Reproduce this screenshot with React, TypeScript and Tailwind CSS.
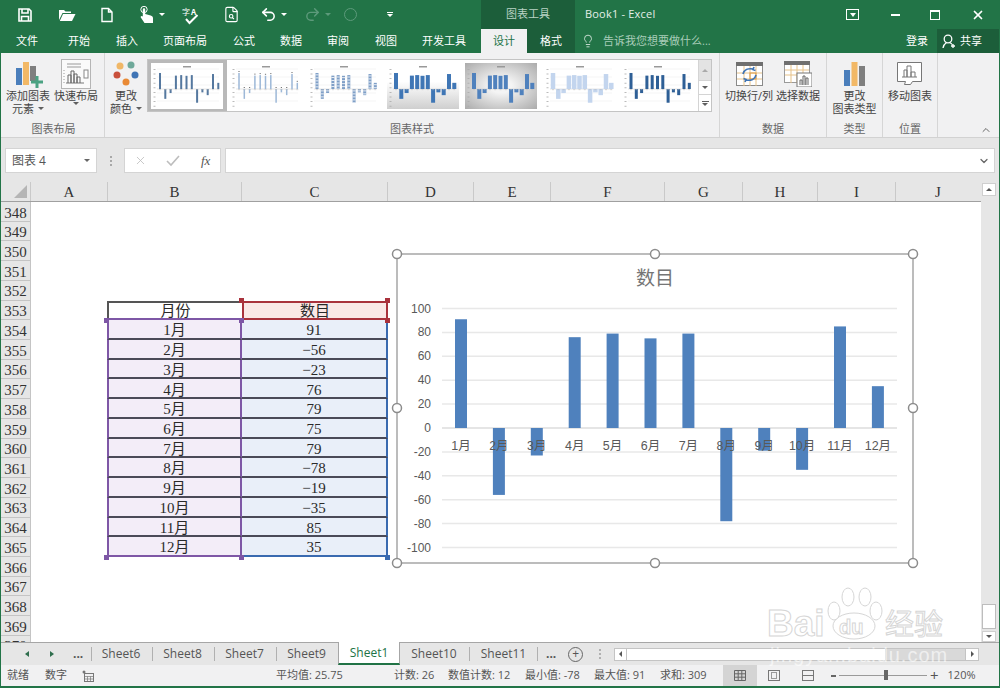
import { ChevronDown, FileSearch, Lightbulb, Redo2, Undo2, X } from "lucide-react";

const months = ["1月", "2月", "3月", "4月", "5月", "6月", "7月", "8月", "9月", "10月", "11月", "12月"];
const values = [91, -56, -23, 76, 79, 75, 79, -78, -19, -35, 85, 35];
const axis = [100, 80, 60, 40, 20, 0, -20, -40, -60, -80, -100];
const columns = [
  { name: "A", width: "w-[77px]" },
  { name: "B", width: "w-[134px]" },
  { name: "C", width: "w-[146px]" },
  { name: "D", width: "w-[86px]" },
  { name: "E", width: "w-[77px]" },
  { name: "F", width: "w-[114px]" },
  { name: "G", width: "w-[78px]" },
  { name: "H", width: "w-[75px]" },
  { name: "I", width: "w-[78px]" },
  { name: "J", width: "w-[84px]" },
];

function Caret({ className = "border-t-[#5f5f5f]" }: { className?: string }) {
  return <span className={`inline-block h-0 w-0 border-x-[3px] border-t-[3px] border-x-transparent ${className}`} />;
}

function SaveIcon() {
  return (
    <svg width="16" height="16" viewBox="0 0 16 16" fill="none" stroke="white" strokeWidth="1.6">
      <path d="M2 2h10l2 2v10H2z" />
      <path d="M5 2v4h6V2M4.500 14V9.500h7V14" />
    </svg>
  );
}

function OpenIcon() {
  return (
    <svg width="18" height="16" viewBox="0 0 18 16" fill="white">
      <path d="M1 3h5l1.500 1.500H13V6H4.500L1 13z" />
      <path d="M5 7h12.500L14 14H1.800z" />
    </svg>
  );
}

function NewIcon() {
  return (
    <svg width="14" height="16" viewBox="0 0 14 16" fill="none" stroke="white" strokeWidth="1.400">
      <path d="M2 1.500h6.500L12 5v9.500H2zM8.500 1.500V5H12" />
    </svg>
  );
}

function TouchIcon() {
  return (
    <svg width="14" height="18" viewBox="0 0 14 18" fill="white">
      <circle cx="4" cy="3.500" r="3.200" fill="none" stroke="white" strokeWidth="1" />
      <path d="M2.800 3.500a1.200 1.200 0 0 1 2.400 0v4.500l5.500 1.500c1.500.4 2.300 1.300 2.300 2.800V17H4.500L.8 11.500c-.6-1 .8-2 1.600-1.200l.4.500z" />
    </svg>
  );
}

function SpellIcon() {
  return (
    <svg width="20" height="20" viewBox="0 0 20 20" className="[font-family:'Noto_Sans_CJK_SC',sans-serif]">
      <text x="1" y="10" fontSize="8" fill="white">字</text>
      <text x="10" y="10" fontSize="8" fontWeight="700" fill="white">A</text>
      <path d="M5 14l3.500 4 8-8" fill="none" stroke="white" strokeWidth="2" />
    </svg>
  );
}

function AddElementIcon() {
  return (
    <svg width="30" height="30" viewBox="0 0 30 30">
      <rect x="3" y="9" width="6" height="17" fill="#4a7ebb" />
      <rect x="10" y="3" width="6" height="23" fill="#f2b866" />
      <rect x="17" y="7" width="6" height="15" fill="#7f7f7f" />
      <path d="M22.500 17h3v4.500H30v3h-4.500V29h-3v-4.500H18v-3h4.500z" fill="#4ba282" />
    </svg>
  );
}

function QuickLayoutIcon() {
  return (
    <svg width="30" height="30" viewBox="0 0 30 30">
      <rect x=".5" y=".5" width="29" height="29" fill="#fafafa" stroke="#b5b5b5" />
      <path d="M6 5h14M6 8h14" stroke="#9a9a9a" />
      <path d="M3 11v1M3 14v1M3 17v1M3 20v1M3 23v1" stroke="#9a9a9a" />
      <path d="M5 24h18" stroke="#777" />
      <path d="M7 24v-8h3v8M10 24V12h3v12M13 24v-9h3v9M16 24v-6h3v6" fill="none" stroke="#666" />
      <rect x="23" y="11" width="4" height="8" fill="white" stroke="#888" />
    </svg>
  );
}

function ColorsIcon() {
  return (
    <svg width="28" height="28" viewBox="0 0 28 28">
      <circle cx="8" cy="6" r="3.500" fill="#f0b767" />
      <circle cx="19" cy="5" r="3.500" fill="#6fa99a" />
      <circle cx="5" cy="15" r="3.500" fill="#c9503c" />
      <circle cx="23" cy="15" r="3.500" fill="#3f74b5" />
      <circle cx="14" cy="22" r="3.500" fill="#e98a35" />
    </svg>
  );
}

function SwitchIcon() {
  return (
    <svg width="27" height="25" viewBox="0 0 27 25">
      <rect x=".5" y=".5" width="26" height="23" fill="white" stroke="#8a8a8a" />
      <rect x="0" y="0" width="27" height="4" fill="#6f6f6f" />
      <path d="M1 11h25M1 17h25M8 4v20M14 4v20M20 4v20" stroke="#e7c289" />
      <rect x="14" y="11" width="6" height="6" fill="none" stroke="#dd9b44" />
      <path d="M7 12c1-4 5-6 10-5M18 5l-1 2.500 2.500 1M20 13c-1 4-5 6-10 5M9 20l1-2.500-2.500-1" fill="none" stroke="#3f74b5" strokeWidth="1.700" />
    </svg>
  );
}

function SelectDataIcon() {
  return (
    <svg width="28" height="26" viewBox="0 0 28 26">
      <rect x=".5" y=".5" width="25" height="21" fill="white" stroke="#9a9a9a" />
      <rect x="0" y="0" width="26" height="4" fill="#6f6f6f" />
      <path d="M1 9h24M1 14h24M7 4v18M13 4v18M19 4v18" stroke="#e7c289" />
      <rect x="13" y="12" width="15" height="14" fill="white" stroke="#777" />
      <path d="M16 24v-5h2v5M19 24V15h2v9M22 24v-7h2v7" fill="none" stroke="#666" />
    </svg>
  );
}

function ChartTypeIcon() {
  return (
    <svg width="22" height="24" viewBox="0 0 22 24">
      <rect x="0" y="8" width="6" height="16" fill="#4a7ebb" />
      <rect x="7.500" y="0" width="6" height="24" fill="#f2b866" />
      <rect x="15" y="4" width="6" height="20" fill="#7f7f7f" />
    </svg>
  );
}

function MoveChartIcon() {
  return (
    <svg width="26" height="24" viewBox="0 0 26 24" fill="none" stroke="#777">
      <path d="M.5.5h24v19h-9l-2 3h-6l1-3H.5z" fill="white" />
      <path d="M5 15h15M7 15V8h3v7M10 15V4h4v11M14 15v-5h4v5" />
    </svg>
  );
}

function SectionLabel({ text }: { text: string }) {
  return <div className="h-[17px] text-center text-[11px] leading-[17px] text-[#666]">{text}</div>;
}

function RibbonButton({ icon, lines, width, caret }: { icon: React.ReactNode; lines: string[]; width: string; caret?: boolean }) {
  return (
    <div className={`flex shrink-0 flex-col items-center ${width}`}>
      <div className="flex h-[30px] items-center justify-center">{icon}</div>
      {lines.map((line, i) => (
        <div key={i} className="flex items-center gap-1 whitespace-nowrap text-[11px] leading-[13px] text-[#444]">
          {line}
          {caret && i === lines.length - 1 && <Caret />}
        </div>
      ))}
    </div>
  );
}

// tiny previews in the chart styles gallery
function Thumb({ kind }: { kind: number }) {
  const zero = 26;
  const colors = ["#55789f", "#9db8d8", "#7f9fc7", "#3f76b5", "#4f81bd", "#c3d5ee", "#2e5f96"];
  const widths = [2, 1.500, 3, 4, 4, 4.500, 3];
  return (
    <svg width="72" height="46" viewBox="0 0 72 46" className="block">
      <defs>
        <linearGradient id="thumbFade" x1="0" y1="0" x2="0" y2="1">
          <stop offset="0.4" stopColor="#ffffff" />
          <stop offset="1" stopColor="#cfcfcf" />
        </linearGradient>
        <radialGradient id="thumbGray" r="0.75">
          <stop offset="0.2" stopColor="#f4f4f4" />
          <stop offset="1" stopColor="#a5a5a5" />
        </radialGradient>
      </defs>
      <rect width="72" height="46" fill={kind === 3 ? "url(#thumbFade)" : kind === 4 ? "url(#thumbGray)" : "white"} />
      <rect x="32" y="3" width="8" height="1.500" fill="#999" />
      {kind < 3 || kind > 4
        ? [6, 14, 22, 30, 38].map((y) => <path key={y} d={`M6 ${y}h62`} stroke="#efefef" strokeWidth=".6" />)
        : null}
      <path d={`M6 ${zero}h62`} stroke="#c9c9c9" strokeWidth=".5" />
      {values.map((v, i) => {
        const h = Math.abs(v) * 0.176;
        const x = 9 + i * 5.300;
        const y = v > 0 ? zero - h : zero;
        return (
          <g key={i}>
            <rect x={x - widths[kind] / 2} y={y} width={widths[kind]} height={h} fill={colors[kind]} />
            {kind === 1 && <rect x={x - 0.6} y={y - 2} width="1.200" height="1" fill="#777" />}
            {kind === 2 && [0, 3, 6, 9, 12].map((d) => (d < h ? <rect key={d} x={x - 1.500} y={y + d + 1.500} width="3" height=".8" fill="white" /> : null))}
            <rect x={x - 1} y={zero + 0.5} width="2" height=".6" fill="#bbb" />
          </g>
        );
      })}
      {[0, 1, 2, 3, 4, 5, 6, 7, 8].map((i) => (
        <rect key={i} x="2.500" y={6 + i * 4.600} width="2" height=".8" fill="#aaa" />
      ))}
    </svg>
  );
}

function QatIcons() {
  return (
    <div className="flex w-[480px] items-center text-white">
      <span className="ml-[16px] flex w-[16px] justify-center"><SaveIcon /></span>
      <span className="ml-[25px] flex w-[18px] justify-center"><OpenIcon /></span>
      <span className="ml-[23px] flex w-[16px] justify-center"><NewIcon /></span>
      <span className="ml-[24px] flex w-[16px] justify-center"><TouchIcon /></span>
      <span className="ml-[4px] flex"><Caret className="border-t-white" /></span>
      <span className="ml-[16px] flex w-[20px] justify-center"><SpellIcon /></span>
      <span className="ml-[20px] flex w-[20px] justify-center"><FileSearch size={17} strokeWidth={1.600} /></span>
      <span className="ml-[17px] flex w-[20px] justify-center"><Undo2 size={17} strokeWidth={2.200} /></span>
      <span className="ml-[3px] flex"><Caret className="border-t-white" /></span>
      <span className="ml-[15px] flex w-[20px] justify-center text-[#5d9a7b]"><Redo2 size={17} strokeWidth={2} /></span>
      <span className="ml-[3px] flex"><Caret className="border-t-[#5d9a7b]" /></span>
      <span className="ml-[13px] h-[13px] w-[13px] rounded-full border border-[#5d9a7b]" />
      <span className="ml-[30px] flex flex-col items-center gap-[1px]">
        <span className="h-px w-[6px] bg-white" />
        <Caret className="border-t-white" />
      </span>
    </div>
  );
}

function TopBar() {
  const tabs = [
    { label: "文件", width: "w-[52px]" },
    { label: "开始", width: "w-[52px]" },
    { label: "插入", width: "w-[44px]" },
    { label: "页面布局", width: "w-[72px]" },
    { label: "公式", width: "w-[46px]" },
    { label: "数据", width: "w-[48px]" },
    { label: "审阅", width: "w-[46px]" },
    { label: "视图", width: "w-[50px]" },
    { label: "开发工具", width: "w-[66px]" },
  ];
  return (
    <div className="h-[53px] shrink-0 bg-[#227447]">
      <div className="flex h-[29px]">
        <QatIcons />
        <div className="flex w-[94px] items-center justify-center bg-[#1c5e3a] text-[11px] text-[#b9d3c5]">图表工具</div>
        <div className="ml-[10px] flex items-center text-[11px] tracking-[0.2px] text-[#e4efe9]">Book1 - Excel</div>
        <div className="ml-auto flex items-center text-white">
          <span className="mr-[32px] flex h-[11px] w-[13px] items-center justify-center border border-white">
            <span className="h-0 w-0 border-x-[3px] border-t-[4px] border-x-transparent border-t-white" />
          </span>
          <span className="mr-[30px] h-[2px] w-[9px] bg-white" />
          <span className="mr-[31px] h-[10px] w-[10px] border border-t-2 border-white" />
          <X size={14} strokeWidth={3} className="mr-[14px]" />
        </div>
      </div>
      <div className="flex h-[24px] items-center text-[11px] text-white">
        {tabs.map((t) => (
          <div key={t.label} className={`text-center ${t.width}`}>{t.label}</div>
        ))}
        <div className="ml-[4px] flex h-full w-[46px] items-center justify-center bg-[#f1f1f2] text-[#217346]">设计</div>
        <div className="flex h-full w-[48px] items-center justify-center bg-[#1c5e3a]">格式</div>
        <Lightbulb size={14} strokeWidth={1.500} className="ml-[6px] text-[#d8e8df]" />
        <span className="ml-[8px] whitespace-nowrap text-[#a9cdb9]">告诉我您想要做什么...</span>
        <span className="ml-auto mr-[9px]">登录</span>
        <div className="flex h-full w-[62px] items-center gap-[4px] bg-[#1c5e3a] pl-[5px]">
          <svg width="14" height="15" viewBox="0 0 14 15" fill="none" stroke="white" strokeWidth="1.300">
            <circle cx="6" cy="5" r="3.800" />
            <path d="M1 14c.5-3 2-4.500 3.500-5.500M7.500 8.500c1 .4 2 1 2.500 2M11 10v4M9 12h4" />
          </svg>
          共享
        </div>
      </div>
    </div>
  );
}

function Ribbon() {
  return (
    <div className="relative flex h-[85px] shrink-0 border-b border-[#d2d2d2] bg-[#f1f1f2]">
      <div className="flex w-[104px] flex-col border-r border-[#d6d6d6] pl-[2px]">
        <div className="flex flex-1 pt-[6px]">
          <RibbonButton icon={<AddElementIcon />} lines={["添加图表", "元素"]} caret width="w-[50px]" />
          <RibbonButton icon={<QuickLayoutIcon />} lines={["快速布局", ""]} caret width="w-[46px]" />
        </div>
        <SectionLabel text="图表布局" />
      </div>

      <div className="flex w-[615px] flex-col border-r border-[#d6d6d6]">
        <div className="flex flex-1 pt-[6px]">
          <RibbonButton icon={<ColorsIcon />} lines={["更改", "颜色"]} caret width="w-[42px]" />
          <div className="flex h-[53px] w-[565px] border border-[#c4c4c4] bg-white">
            {[0, 1, 2, 3, 4, 5, 6].map((k) => (
              <div key={k} className={`flex-1 p-[3px] ${k === 0 ? "bg-[#b9b9b9]" : ""}`}>
                <Thumb kind={k} />
              </div>
            ))}
            <div className="flex w-[13px] shrink-0 flex-col border-l border-[#d4d4d4] text-[#666]">
              <div className="flex h-[20px] items-center justify-center bg-[#e3e3e3]"><span className="h-0 w-0 border-x-[3px] border-b-[3px] border-x-transparent border-b-[#aaa]" /></div>
              <div className="flex h-[15px] items-center justify-center border-y border-[#d4d4d4]"><Caret /></div>
              <div className="flex flex-1 flex-col items-center justify-center gap-[1px]">
                <span className="h-px w-[7px] bg-[#5f5f5f]" />
                <Caret />
              </div>
            </div>
          </div>
        </div>
        <SectionLabel text="图表样式" />
      </div>

      <div className="flex w-[107px] flex-col border-r border-[#d6d6d6]">
        <div className="flex flex-1 pt-[6px]">
          <RibbonButton icon={<SwitchIcon />} lines={["切换行/列"]} width="w-[58px]" />
          <RibbonButton icon={<SelectDataIcon />} lines={["选择数据"]} width="w-[40px]" />
        </div>
        <SectionLabel text="数据" />
      </div>

      <div className="flex w-[56px] flex-col border-r border-[#d6d6d6]">
        <div className="flex flex-1 justify-center pt-[6px]">
          <RibbonButton icon={<ChartTypeIcon />} lines={["更改", "图表类型"]} width="w-[50px]" />
        </div>
        <SectionLabel text="类型" />
      </div>

      <div className="flex w-[55px] flex-col border-r border-[#d6d6d6]">
        <div className="flex flex-1 justify-center pt-[6px]">
          <RibbonButton icon={<MoveChartIcon />} lines={["移动图表"]} width="w-[50px]" />
        </div>
        <SectionLabel text="位置" />
      </div>

      <ChevronDown size={12} strokeWidth={2} className="absolute bottom-[1px] right-[7px] rotate-180 text-[#666]" />
    </div>
  );
}

function FormulaBar() {
  return (
    <div className="flex h-[44px] shrink-0 items-start bg-[#e6e6e6] pr-[4px] pt-[10px]">
      <div className="ml-[4px] flex h-[25px] w-[92px] items-center justify-between border border-[#d4d4d4] bg-white px-[6px] text-[12px] text-[#555]">
        图表 4
        <Caret className="border-t-[#666]" />
      </div>
      <div className="ml-[12px] flex h-[25px] w-[3px] flex-col items-center justify-center gap-[2px]">
        <span className="h-[2px] w-[2px] bg-[#a8a8a8]" />
        <span className="h-[2px] w-[2px] bg-[#a8a8a8]" />
        <span className="h-[2px] w-[2px] bg-[#a8a8a8]" />
      </div>
      <div className="ml-[12px] flex h-[25px] w-[97px] items-center border border-[#d4d4d4] bg-white">
        <X size={13} strokeWidth={1.500} className="ml-[9px] text-[#bdbdbd]" />
        <svg width="14" height="12" viewBox="0 0 14 12" fill="none" stroke="#bdbdbd" strokeWidth="1.600" className="ml-[19px]">
          <path d="M1 6l4 4 8-9" />
        </svg>
        <span className="ml-[21px] [font-family:'Liberation_Serif',serif] text-[13px] italic text-[#555]">fx</span>
      </div>
      <div className="ml-[4px] flex h-[25px] flex-1 items-center justify-end border border-[#d4d4d4] bg-white pr-[4px]">
        <ChevronDown size={12} strokeWidth={2.500} className="text-[#666]" />
      </div>
    </div>
  );
}

function ColumnHeaders() {
  return (
    <div className="flex h-[20px] shrink-0 border-b border-[#a0a0a0] bg-[#e6e6e6] [font-family:'Liberation_Serif',serif] text-[15px] leading-[20px] text-[#333]">
      <div className="relative w-[30px] border-r border-[#c9c9c9]">
        <span className="absolute bottom-[3px] right-[3px] h-0 w-0 border-b-[13px] border-l-[13px] border-b-[#b5b5b5] border-l-transparent" />
      </div>
      {columns.map((c) => (
        <div key={c.name} className={`border-r border-[#c9c9c9] text-center last:border-r-0 ${c.width}`}>{c.name}</div>
      ))}
    </div>
  );
}

function SheetRow({ n }: { n: number }) {
  const idx = n - 354;
  const isHead = n === 353;
  const isData = idx >= 0 && idx < 12;
  const last = idx === 11;
  let cellB = null;
  let cellC = null;
  if (isHead) {
    cellB = <div className="flex h-full w-[135px] items-center justify-center border-b-2 border-l-2 border-t-2 border-[#555] border-b-[#7e57a6] pt-[2px]">月份</div>;
    cellC = <div className="flex h-full w-[146px] items-center justify-center border-2 border-[#a9323c] bg-[#fae8e6] pt-[2px]">数目</div>;
  }
  if (isData) {
    cellB = (
      <div className={`flex h-full w-[135px] items-center justify-center border-x-2 border-x-[#7e57a6] bg-[#f3edf8] pt-[3px] ${last ? "border-b-2 border-b-[#7e57a6]" : "border-b-2 border-b-[#4a4a58]"}`}>
        {months[idx]}
      </div>
    );
    cellC = (
      <div className={`flex h-full w-[146px] items-center justify-center border-r-2 border-r-[#3a6ab0] bg-[#e9eff9] pt-[3px] ${last ? "border-b-2 border-b-[#3a6ab0]" : "border-b-2 border-b-[#4a4a58]"}`}>
        {values[idx] < 0 ? `\u2212${Math.abs(values[idx])}` : values[idx]}
      </div>
    );
  }
  return (
    <div className="flex h-[19.72px] shrink-0">
      <div className="flex w-[30px] shrink-0 items-center justify-center border-b border-r border-[#c4c4c4] bg-[#e6e6e6] pt-[3px] text-[#333]">{n}</div>
      <div className="w-[76px] shrink-0" />
      {cellB}
      {cellC}
    </div>
  );
}

function ChartOverlay() {
  const zero = 428;
  const scale = 1.195;
  const handles = [
    [397, 254], [655, 254], [913, 254], [397, 408], [913, 408], [397, 563], [655, 563], [913, 563],
  ];
  return (
    <svg
      width="530"
      height="322"
      viewBox="390 248 530 322"
      className="absolute left-[389px] top-[46px] [font-family:'Liberation_Sans','Noto_Sans_CJK_SC',sans-serif]"
    >
      <rect x="397" y="254" width="516" height="309" fill="white" stroke="#a6a6a6" strokeWidth="1.500" />
      <text x="655" y="285" textAnchor="middle" fontSize="19" fill="#757575">数目</text>
      {axis.map((a) => {
        const y = zero - a * scale;
        return (
          <g key={a}>
            <path d={`M442 ${y}H897`} stroke={a === 0 ? "#dcdcdc" : "#e8e8e8"} strokeWidth="1.500" />
            <text x="431" y={y + 4} textAnchor="end" fontSize="12" fill="#595959">{a}</text>
          </g>
        );
      })}
      {values.map((v, i) => {
        const cx = 461 + i * 37.900;
        const h = Math.abs(v) * scale;
        return <rect key={i} x={cx - 6} y={v > 0 ? zero - h : zero} width="12" height={h} fill="#4f81bd" />;
      })}
      {months.map((m, i) => (
        <text key={m} x={461 + i * 37.900} y="450" textAnchor="middle" fontSize="12.500" fill="#595959">{m}</text>
      ))}
      {handles.map(([x, y]) => (
        <circle key={`${x}-${y}`} cx={x} cy={y} r="4.500" fill="white" stroke="#8c8c8c" strokeWidth="1.500" />
      ))}
    </svg>
  );
}

function Sheet() {
  const rows = [];
  for (let n = 348; n <= 370; n++) rows.push(n);
  return (
    <div className="relative min-h-0 flex-1 overflow-hidden bg-white [font-family:'Liberation_Serif','Noto_Sans_CJK_SC',serif] text-[15px] text-[#2a2a2a]">
      {rows.map((n) => (
        <SheetRow key={n} n={n} />
      ))}
      <span className="absolute left-[238px] top-[96px] h-[5px] w-[5px] bg-[#a9323c]" />
      <span className="absolute left-[384px] top-[96px] h-[5px] w-[5px] bg-[#a9323c]" />
      <span className="absolute left-[384px] top-[116px] h-[5px] w-[5px] bg-[#a9323c]" />
      <span className="absolute left-[103px] top-[116px] h-[5px] w-[5px] bg-[#7e57a6]" />
      <span className="absolute left-[238px] top-[116px] h-[5px] w-[5px] bg-[#7e57a6]" />
      <span className="absolute left-[103px] top-[353px] h-[5px] w-[5px] bg-[#7e57a6]" />
      <span className="absolute left-[238px] top-[353px] h-[5px] w-[5px] bg-[#7e57a6]" />
      <span className="absolute left-[384px] top-[353px] h-[5px] w-[5px] bg-[#3a6ab0]" />
      <ChartOverlay />
    </div>
  );
}

function VerticalScroll() {
  return (
    <div className="flex w-[18px] shrink-0 flex-col items-center bg-[#e6e6e6] pr-[2px] pt-[1px]">
      <div className="flex h-[13px] w-[14px] items-center justify-center border border-[#cfcfcf] bg-white">
        <span className="h-0 w-0 border-x-[3px] border-b-[3px] border-x-transparent border-b-[#555]" />
      </div>
      <div className="mt-auto h-[25px] w-[14px] border border-[#bdbdbd] bg-white" />
      <div className="mt-[2px] flex h-[11px] w-[14px] items-center justify-center border border-[#cfcfcf] bg-white">
        <Caret className="border-t-[#555]" />
      </div>
    </div>
  );
}

function SheetTabs() {
  const before = [
    { label: "Sheet6", width: "w-[61px]" },
    { label: "Sheet8", width: "w-[62px]" },
    { label: "Sheet7", width: "w-[62px]" },
    { label: "Sheet9", width: "w-[62px]" },
  ];
  const after = [
    { label: "Sheet10", width: "w-[68px]" },
    { label: "Sheet11", width: "w-[69px]" },
  ];
  return (
    <div className="flex h-[23px] shrink-0 items-stretch border-t border-[#a6a6a6] bg-[#e6e6e6] text-[12px] text-[#555]">
      <div className="flex w-[90px] items-center border-r-0">
        <span className="ml-[24px] h-0 w-0 border-y-[3.500px] border-r-[4px] border-y-transparent border-r-[#2f6e4d]" />
        <span className="ml-[21px] h-0 w-0 border-y-[3.500px] border-l-[4px] border-y-transparent border-l-[#2f6e4d]" />
        <span className="ml-[19px] font-bold leading-none">...</span>
      </div>
      {before.map((t) => (
        <div key={t.label} className={`flex items-center ${t.width}`}>
          <span className="h-[14px] w-px bg-[#b0b0b0]" />
          <span className="flex-1 pr-[2px] text-center">{t.label}</span>
        </div>
      ))}
      <div className="-mt-px flex w-[62px] items-center justify-center border-x border-b-2 border-x-[#a6a6a6] border-b-[#217346] bg-white text-[#217346]">Sheet1</div>
      {after.map((t, i) => (
        <div key={t.label} className={`flex items-center justify-center ${t.width} ${i === 1 ? "pl-[1px]" : ""}`}>
          {i === 1 && <span className="h-[14px] w-px bg-[#b0b0b0]" />}
          <span className="flex-1 text-center">{t.label}</span>
        </div>
      ))}
      <div className="flex items-center">
        <span className="h-[14px] w-px bg-[#b0b0b0]" />
        <span className="ml-[8px] font-bold leading-none">...</span>
        <span className="ml-[12px] flex h-[15px] w-[15px] items-center justify-center rounded-full border border-[#666] text-[12px] leading-none">+</span>
        <span className="ml-[16px] flex flex-col gap-[2px]">
          <span className="h-[2px] w-[2px] bg-[#b0b0b0]" />
          <span className="h-[2px] w-[2px] bg-[#b0b0b0]" />
          <span className="h-[2px] w-[2px] bg-[#b0b0b0]" />
        </span>
        <div className="ml-[13px] flex h-[13px] w-[365px] border border-[#c4c4c4] bg-[#d9d9d9]">
          <span className="flex w-[12px] items-center justify-center border-r border-[#c4c4c4] bg-white">
            <span className="h-0 w-0 border-y-[3px] border-r-[3px] border-y-transparent border-r-[#555]" />
          </span>
          <span className="w-[259px] border-r border-[#c4c4c4] bg-white" />
          <span className="ml-auto flex w-[13px] items-center justify-center border-l border-[#c4c4c4] bg-white">
            <span className="h-0 w-0 border-y-[3px] border-l-[3px] border-y-transparent border-l-[#555]" />
          </span>
        </div>
      </div>
    </div>
  );
}

function StatusBar() {
  const stats = [
    { text: "平均值: 25.75", width: "w-[118px]" },
    { text: "计数: 26", width: "w-[54px]" },
    { text: "数值计数: 12", width: "w-[77px]" },
    { text: "最小值: -78", width: "w-[69px]" },
    { text: "最大值: 91", width: "w-[66px]" },
    { text: "求和: 309", width: "w-[63px]" },
  ];
  return (
    <div className="flex h-[21px] shrink-0 items-center bg-[#f1f1f2] pl-[6px] text-[11px] text-[#555]">
      <span className="w-[38px]">就绪</span>
      <span className="w-[37px]">数字</span>
      <svg width="12" height="12" viewBox="0 0 12 12" className="w-[12px]" fill="none" stroke="#777">
        <rect x="2.500" y="3.500" width="9" height="8" />
        <path d="M2.500 6.500h9M2.500 9h9M5.500 6.500v5M8.500 6.500v5" strokeWidth=".7" />
        <circle cx="2" cy="2" r="1.500" fill="#777" stroke="none" />
      </svg>
      <span className="w-[182px]" />
      {stats.map((s) => (
        <span key={s.text} className={`whitespace-nowrap ${s.width}`}>{s.text}</span>
      ))}
      <span className="flex h-full w-[34px] items-center justify-center bg-[#d4d4d4]">
        <svg width="12" height="11" viewBox="0 0 12 11" fill="none" stroke="#666">
          <path d="M.5.500h11v10H.5zM.5 3.800h11M.5 7.200h11M4.200.500v10M7.800.500v10" />
        </svg>
      </span>
      <span className="ml-[11px] flex h-[11px] w-[12px] items-center justify-center border border-[#777]">
        <span className="h-[7px] w-[6px] border border-[#999]" />
      </span>
      <span className="ml-[22px] h-[11px] w-[12px] border border-[#777] bg-[linear-gradient(#0000_50%,#777_50%,#777_60%,#0000_60%)]" />
      <span className="ml-[17px] h-[2px] w-[5px] bg-[#666]" />
      <span className="relative ml-[3px] h-px w-[88px] bg-[#9a9a9a]">
        <span className="absolute left-[45px] top-[-5px] h-[10px] w-[4px] bg-[#666]" />
      </span>
      <span className="ml-[3px] text-[15px] leading-none text-[#555]">+</span>
      <span className="ml-[9px]">120%</span>
    </div>
  );
}

// baidu watermark sitting over the lower right corner
function Watermark() {
  return (
    <svg
      width="1000"
      height="688"
      viewBox="0 0 1000 688"
      className="pointer-events-none absolute left-0 top-0 [font-family:'Liberation_Sans','Noto_Sans_CJK_SC',sans-serif]"
    >
      <g fill="white" fillOpacity=".75" stroke="#d6d6d6" strokeWidth="1">
        <text x="766" y="636" fontSize="37" fontWeight="700">Bai</text>
        <ellipse cx="853" cy="626" rx="21" ry="13" />
        <ellipse cx="833" cy="611" rx="6" ry="9" />
        <ellipse cx="847" cy="597" rx="6" ry="9" />
        <ellipse cx="864" cy="597" rx="6" ry="9" />
        <ellipse cx="875" cy="611" rx="6" ry="9" />
        <text x="838" y="634" fontSize="20" fontWeight="700">du</text>
        <text x="884" y="635" fontSize="29">经验</text>
      </g>
      <text x="769" y="662" fontSize="20" fill="white" fillOpacity=".6" letterSpacing="1">jingyan.baidu.com</text>
    </svg>
  );
}

export default function App() {
  return (
    <div className="relative flex h-[688px] w-[1000px] flex-col overflow-hidden border-x border-b-2 border-[#227447] bg-[#e6e6e6] [font-family:'Open_Sans','Noto_Sans_CJK_SC',sans-serif]">
      <TopBar />
      <Ribbon />
      <FormulaBar />
      <div className="flex min-h-0 flex-1">
        <div className="flex w-[980px] shrink-0 flex-col">
          <ColumnHeaders />
          <Sheet />
        </div>
        <VerticalScroll />
      </div>
      <SheetTabs />
      <StatusBar />
      <Watermark />
    </div>
  );
}
